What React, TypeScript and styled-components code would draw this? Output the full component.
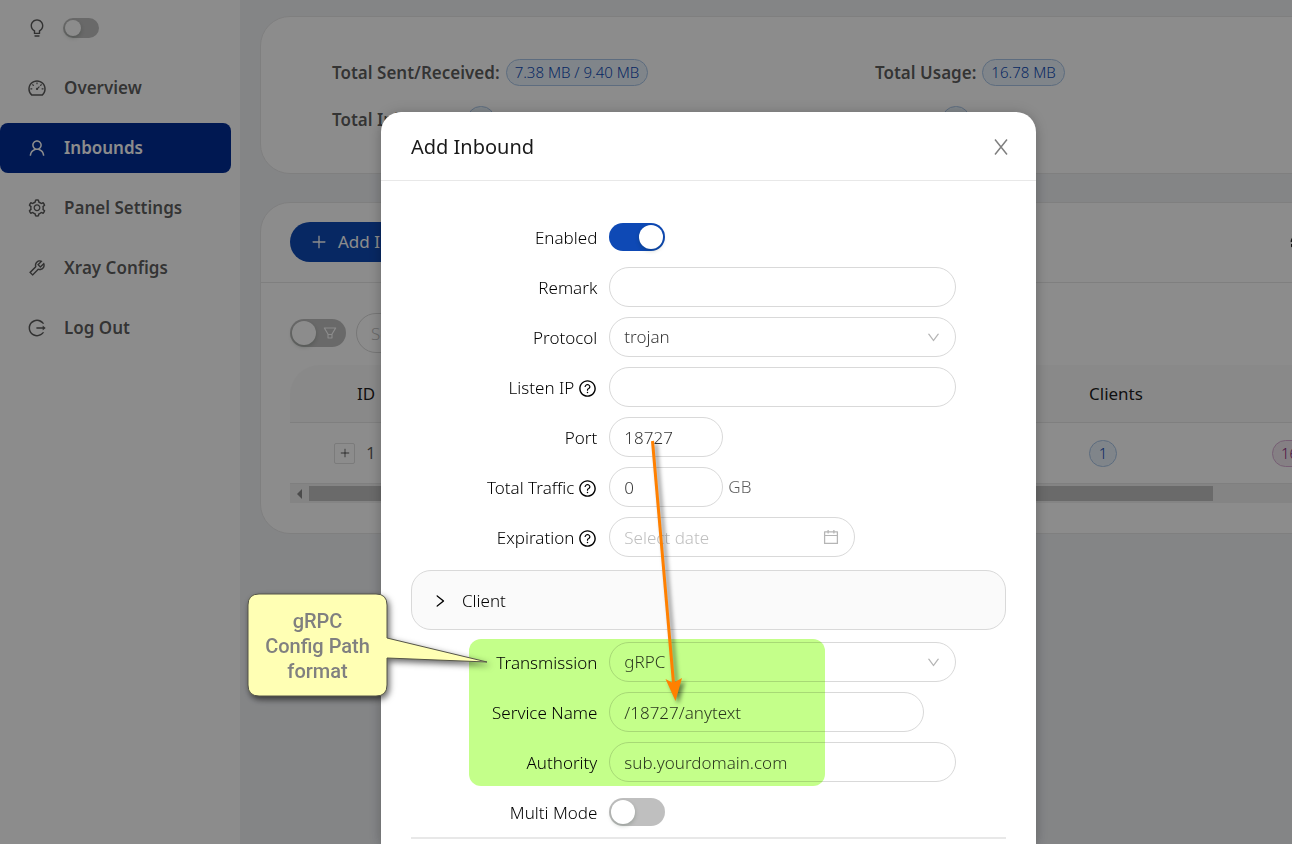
import React from "react";
import styled, { createGlobalStyle } from "styled-components";
import {
  AiOutlineBulb,
  AiOutlineDashboard,
  AiOutlineUser,
  AiOutlineSetting,
  AiOutlineTool,
  AiOutlineLogout,
  AiOutlinePlus,
  AiOutlineFilter,
  AiOutlineDown,
  AiOutlineQuestionCircle,
  AiOutlineCalendar,
  AiOutlineRight,
  AiOutlineSync,
} from "react-icons/ai";

const Global = createGlobalStyle`
  *, *::before, *::after { box-sizing: border-box; }
  body {
    margin: 0;
    background: #f0f2f5;
    color: rgba(0, 0, 0, 0.65);
    font: 400 17px/26px "Noto Sans", "Open Sans", sans-serif;
  }
  button, input, select { font: inherit; color: inherit; }
`;

/* ---------- page shell ---------- */

const Page = styled.div`
  display: flex;
  height: 100vh;
  overflow: hidden;
`;

const Sidebar = styled.aside`
  flex: 0 0 240px;
  background: #fff;
`;

const ThemeRow = styled.label`
  display: flex;
  align-items: center;
  gap: 16px;
  height: 63px;
  padding: 0 0 8px 27px;
`;

const Nav = styled.nav`
  display: flex;
  flex-direction: column;
  gap: 10px;
  padding-right: 9px;
`;

const NavLink = styled.a<{ $active?: boolean }>`
  display: flex;
  align-items: center;
  gap: 17px;
  height: 50px;
  padding-left: 27px;
  border-radius: 8px;
  font-weight: 600;
  text-decoration: none;
  color: ${(p) => (p.$active ? "#fff" : "rgba(0, 0, 0, 0.65)")};
  background: ${(p) => (p.$active ? "#002c96" : "transparent")};
  svg { font-size: 20px; }
`;

const Main = styled.main`
  flex: 1 0 1270px;
  display: flex;
  flex-direction: column;
  gap: 28px;
  padding: 16px 20px;
`;

const Card = styled.section`
  border: 1px solid #e8e8e8;
  border-radius: 30px;
  background: #fff;
`;

const Stats = styled(Card)`
  display: grid;
  grid-template-columns: 1fr 1fr;
  gap: 20px 0;
  padding: 42px 71px 40px;
`;

const Stat = styled.div`
  display: flex;
  align-items: center;
  gap: 6px;
  height: 27px;
  white-space: nowrap;
`;

const StatLabel = styled.span`
  font-weight: 600;
`;

const Tag = styled.span<{ $tone?: "purple" }>`
  display: inline-block;
  padding: 0 8px;
  border: 1px solid ${(p) => (p.$tone ? "#d9aed3" : "#a9c5e7")};
  border-radius: 14px;
  background: ${(p) => (p.$tone ? "#f2eaf1" : "#e9f3fb")};
  color: ${(p) => (p.$tone ? "#8a2379" : "#0e49b5")};
  font-size: 15px;
  font-weight: 300;
  line-height: 25px;
  min-width: 28px;
  text-align: center;
`;

const CardHead = styled.div`
  display: flex;
  align-items: center;
  justify-content: space-between;
  height: 80px;
  padding: 0 182px 2px 29px;
  border-bottom: 1px solid #e8e8e8;
`;

const AddButton = styled.button`
  display: flex;
  align-items: center;
  gap: 10px;
  height: 40px;
  padding: 0 20px;
  border: 0;
  border-radius: 20px;
  background: #0e49b5;
  color: #fff;
  svg { font-size: 18px; }
`;

const IconButton = styled.button`
  display: flex;
  padding: 0;
  border: 0;
  background: none;
  color: rgba(0, 0, 0, 0.85);
  font-size: 18px;
`;

const CardBody = styled.div`
  padding: 30px 29px;
`;

const Filters = styled.div`
  display: flex;
  align-items: center;
  gap: 10px;
  margin-bottom: 12px;
`;

/* ---------- controls ---------- */

const SwitchBox = styled.span<{ $small?: boolean }>`
  position: relative;
  display: inline-flex;
  align-items: center;
  justify-content: flex-end;
  width: ${(p) => (p.$small ? 36 : 56)}px;
  height: ${(p) => (p.$small ? 20 : 28)}px;
  color: #fff;
  svg { position: absolute; right: 8px; font-size: 16px; }
`;

const SwitchInput = styled.input<{ $small?: boolean }>`
  appearance: none;
  width: 100%;
  height: 100%;
  margin: 0;
  padding: 2px;
  border-radius: 14px;
  background: rgba(0, 0, 0, 0.25);
  display: flex;
  &::before {
    content: "";
    width: ${(p) => (p.$small ? 16 : 24)}px;
    height: ${(p) => (p.$small ? 16 : 24)}px;
    border-radius: 50%;
    background: #fff;
    box-shadow: 0 2px 4px rgba(0, 35, 11, 0.2);
  }
  &:checked { background: #0e49b5; justify-content: flex-end; }
`;

const TextInput = styled.input<{ $width?: string }>`
  width: ${(p) => p.$width ?? "100%"};
  height: 40px;
  padding: 0 14px;
  border: 1px solid #d9d9d9;
  border-radius: 20px;
  background: #fff;
  color: rgba(0, 0, 0, 0.8);
  font-weight: 300;
  &::placeholder { color: #bfbfbf; opacity: 1; }
`;

const IconField = styled.span<{ $width?: string }>`
  position: relative;
  display: flex;
  align-items: center;
  width: ${(p) => p.$width ?? "100%"};
  svg {
    position: absolute;
    right: 15px;
    color: #b5b5b5;
    pointer-events: none;
  }
`;

const Select = styled.select`
  appearance: none;
  width: 100%;
  height: 40px;
  padding: 0 14px;
  border: 1px solid #d9d9d9;
  border-radius: 20px;
  background: #fff;
  color: rgba(0, 0, 0, 0.8);
  font-weight: 300;
`;

/* ---------- inbound table ---------- */

const Table = styled.table`
  width: 100%;
  table-layout: fixed;
  border-collapse: separate;
  border-spacing: 0;
  th, td {
    padding: 0;
    border-bottom: 1px solid #e8e8e8;
    text-align: left;
  }
  th {
    height: 58px;
    background: #fafafa;
    color: rgba(0, 0, 0, 0.9);
    font-weight: 400;
  }
  th:first-child { border-top-left-radius: 30px; }
  td { height: 61px; }
`;

const Col = styled.col<{ $width?: number }>`
  width: ${(p) => (p.$width ? `${p.$width}px` : "auto")};
`;

const IdHead = styled.th`
  && { padding-left: 67px; }
`;

const IdCell = styled.div`
  display: flex;
  align-items: center;
  gap: 11px;
  padding-left: 44px;
`;

const Expand = styled.button`
  display: flex;
  align-items: center;
  justify-content: center;
  width: 21px;
  height: 21px;
  padding: 0;
  border: 1px solid #e0e0e0;
  border-radius: 2px;
  background: #fff;
  font-size: 12px;
`;

const ScrollTrack = styled.div`
  display: flex;
  align-items: center;
  height: 19px;
  background: #f1f1f1;
`;

const ScrollArrow = styled.span`
  width: 19px;
  display: flex;
  justify-content: center;
  &::before {
    content: "";
    border: 5px solid transparent;
    border-left: 0;
    border-right-color: #8a8a8a;
  }
`;

const ScrollThumb = styled.div`
  flex: 0 0 904px;
  height: 15px;
  background: #c1c1c1;
`;

/* ---------- dialog ---------- */

const Mask = styled.div`
  position: fixed;
  inset: 0;
  display: flex;
  justify-content: center;
  padding: 112px 0 0 125px;
  background: rgba(0, 0, 0, 0.45);
  overflow: hidden;
`;

const Dialog = styled.div`
  position: relative;
  flex: 0 1 655px;
  border-radius: 20px 20px 0 0;
  background: #fff;
  box-shadow: 0 4px 12px rgba(0, 0, 0, 0.15), 0 0 16px rgba(0, 0, 0, 0.15);
`;

const DialogHead = styled.header`
  display: flex;
  align-items: center;
  justify-content: space-between;
  height: 69px;
  padding: 2px 25px 0 30px;
  border-bottom: 1px solid #e8e8e8;
`;

const Title = styled.h2`
  margin: 0;
  font-size: 20px;
  font-weight: 400;
  color: rgba(0, 0, 0, 0.9);
`;

const Close = styled(IconButton)`
  color: rgba(0, 0, 0, 0.5);
`;

const Form = styled.form`
  padding: 36px 30px 0;
`;

const Rows = styled.div`
  display: grid;
  gap: 10px;
`;

const Row = styled.div`
  display: grid;
  grid-template-columns: 8fr 14fr 2fr;
  align-items: center;
  height: 40px;
`;

const Label = styled.label`
  display: flex;
  align-items: center;
  justify-content: flex-end;
  gap: 4px;
  padding: 2px 12px 0 0;
  color: #000;
  font-weight: 300;
  white-space: nowrap;
  svg { font-size: 19px; }
`;

const Field = styled.div`
  display: flex;
  align-items: center;
  gap: 5px;
  font-weight: 300;
`;

const Collapse = styled.button`
  display: flex;
  align-items: center;
  gap: 14px;
  width: 100%;
  height: 60px;
  margin: 13px 0 12px;
  padding: 2px 20px 0;
  border: 1px solid #d9d9d9;
  border-radius: 20px;
  background: #fafafa;
  color: #000;
  font-weight: 300;
  svg { font-size: 16px; }
`;

const Divider = styled.hr`
  height: 2px;
  margin: 5px 0 0;
  border: 0;
  background: #e8e8e8;
`;

/* ---------- annotations floating over the dialog ---------- */

const Highlight = styled.div`
  position: absolute;
  left: 88px;
  top: 527px;
  width: 356px;
  height: 147px;
  border-radius: 12px;
  background: #c4ff8a;
  mix-blend-mode: multiply;
  pointer-events: none;
`;

const Arrow = styled.svg`
  position: absolute;
  left: 259px;
  top: 319px;
  width: 60px;
  height: 280px;
  filter: drop-shadow(3px 3px 2px rgba(0, 0, 0, 0.5));
  pointer-events: none;
`;

const Callout = styled.div`
  position: absolute;
  left: -134px;
  top: 481px;
  width: 241px;
  filter: drop-shadow(2px 3px 3px rgba(0, 0, 0, 0.6));
  svg { position: absolute; left: 0; top: 0; }
`;

const CalloutText = styled.p`
  position: relative;
  width: 141px;
  margin: 0;
  padding: 16px 0 13px;
  color: #808080;
  font: 500 20px/25px Roboto, sans-serif;
  text-align: center;
`;

const nav = [
  { label: "Overview", icon: <AiOutlineDashboard /> },
  { label: "Inbounds", icon: <AiOutlineUser />, active: true },
  { label: "Panel Settings", icon: <AiOutlineSetting /> },
  { label: "Xray Configs", icon: <AiOutlineTool /> },
  { label: "Log Out", icon: <AiOutlineLogout /> },
];

const stats = [
  ["Total Sent/Received:", "7.38 MB / 9.40 MB"],
  ["Total Usage:", "16.78 MB"],
  ["Total Inbounds:", "1"],
  ["Clients:", "1"],
];

type FormRowProps = {
  id: string;
  label: string;
  help?: boolean;
  children: React.ReactNode;
};

const FormRow = ({ id, label, help, children }: FormRowProps) => (
  <Row>
    <Label htmlFor={id}>
      {label}
      {help && <AiOutlineQuestionCircle />}
    </Label>
    <Field>{children}</Field>
  </Row>
);

export default function App() {
  return (
    <>
      <Global />
      <Page>
        <Sidebar>
          <ThemeRow>
            <AiOutlineBulb size={20} />
            <SwitchBox $small>
              <SwitchInput $small type="checkbox" aria-label="Dark theme" />
            </SwitchBox>
          </ThemeRow>
          <Nav>
            {nav.map((n) => (
              <NavLink key={n.label} href="#" $active={n.active}>
                {n.icon}
                {n.label}
              </NavLink>
            ))}
          </Nav>
        </Sidebar>

        <Main>
          <Stats>
            {stats.map(([label, value]) => (
              <Stat key={label}>
                <StatLabel>{label}</StatLabel>
                <Tag>{value}</Tag>
              </Stat>
            ))}
          </Stats>

          <Card>
            <CardHead>
              <AddButton type="button">
                <AiOutlinePlus />
                Add Inbound
              </AddButton>
              <IconButton type="button" aria-label="Refresh">
                <AiOutlineSync />
              </IconButton>
            </CardHead>
            <CardBody>
              <Filters>
                <SwitchBox>
                  <SwitchInput type="checkbox" aria-label="Filter" />
                  <AiOutlineFilter />
                </SwitchBox>
                <TextInput $width="280px" placeholder="Search" aria-label="Search" />
              </Filters>
              <Table>
                <colgroup>
                  <Col $width={120} />
                  <Col $width={679} />
                  <Col $width={183} />
                  <Col />
                </colgroup>
                <thead>
                  <tr>
                    <IdHead>ID</IdHead>
                    <th />
                    <th>Clients</th>
                    <th />
                  </tr>
                </thead>
                <tbody>
                  <tr>
                    <td>
                      <IdCell>
                        <Expand type="button" aria-label="Expand row">
                          <AiOutlinePlus />
                        </Expand>
                        1
                      </IdCell>
                    </td>
                    <td />
                    <td>
                      <Tag>1</Tag>
                    </td>
                    <td>
                      <Tag $tone="purple">16.78 MB</Tag>
                    </td>
                  </tr>
                </tbody>
              </Table>
              <ScrollTrack>
                <ScrollArrow />
                <ScrollThumb />
              </ScrollTrack>
            </CardBody>
          </Card>
        </Main>
      </Page>

      <Mask>
        <Dialog role="dialog" aria-labelledby="dialog-title">
          <DialogHead>
            <Title id="dialog-title">Add Inbound</Title>
            <Close type="button" aria-label="Close">
              <svg width="20" height="20" viewBox="0 0 20 20" aria-hidden="true">
                <path
                  d="M4 2.500L16 17.500M16 2.500L4 17.500"
                  stroke="currentColor"
                  strokeWidth="1.500"
                  fill="none"
                />
              </svg>
            </Close>
          </DialogHead>
          <Form>
            <Rows>
              <FormRow id="enabled" label="Enabled">
                <SwitchBox>
                  <SwitchInput id="enabled" type="checkbox" defaultChecked />
                </SwitchBox>
              </FormRow>
              <FormRow id="remark" label="Remark">
                <TextInput id="remark" />
              </FormRow>
              <FormRow id="protocol" label="Protocol">
                <IconField>
                  <Select id="protocol">
                    <option>trojan</option>
                  </Select>
                  <AiOutlineDown size={15} />
                </IconField>
              </FormRow>
              <FormRow id="listen" label="Listen IP" help>
                <TextInput id="listen" />
              </FormRow>
              <FormRow id="port" label="Port">
                <TextInput id="port" $width="114px" defaultValue="18727" />
              </FormRow>
              <FormRow id="traffic" label="Total Traffic" help>
                <TextInput id="traffic" $width="114px" defaultValue="0" />
                GB
              </FormRow>
              <FormRow id="expiration" label="Expiration" help>
                <IconField $width="246px">
                  <TextInput id="expiration" placeholder="Select date" />
                  <AiOutlineCalendar size={18} />
                </IconField>
              </FormRow>
            </Rows>
            <Collapse type="button">
              <AiOutlineRight />
              Client
            </Collapse>
            <Rows>
              <FormRow id="transmission" label="Transmission">
                <IconField>
                  <Select id="transmission">
                    <option>gRPC</option>
                  </Select>
                  <AiOutlineDown size={15} />
                </IconField>
              </FormRow>
              <FormRow id="service" label="Service Name">
                <TextInput id="service" $width="315px" defaultValue="/18727/anytext" />
              </FormRow>
              <FormRow id="authority" label="Authority">
                <TextInput id="authority" defaultValue="sub.yourdomain.com" />
              </FormRow>
              <FormRow id="multi" label="Multi Mode">
                <SwitchBox>
                  <SwitchInput id="multi" type="checkbox" />
                </SwitchBox>
              </FormRow>
            </Rows>
            <Divider />
          </Form>

          <Highlight />
          <Arrow viewBox="0 0 60 280" aria-hidden="true">
            <path d="M12.500 10L33.500 252" stroke="#ff8000" strokeWidth="3" fill="none" />
            <path d="M25.500 248L33 252L42 247L35.500 270Z" fill="#ff8000" />
          </Arrow>
          <Callout>
            <svg width="241" height="106" viewBox="0 0 241 106" aria-hidden="true">
              <path
                d="M12 1H129Q140 1 140 12V45L240 69L140 65V92Q140 103 129 103H12Q1 103 1 92V12Q1 1 12 1Z"
                fill="#ffffb4"
                stroke="#555548"
                strokeWidth="1"
              />
            </svg>
            <CalloutText>
              gRPC
              <br />
              Config Path
              <br />
              format
            </CalloutText>
          </Callout>
        </Dialog>
      </Mask>
    </>
  );
}
